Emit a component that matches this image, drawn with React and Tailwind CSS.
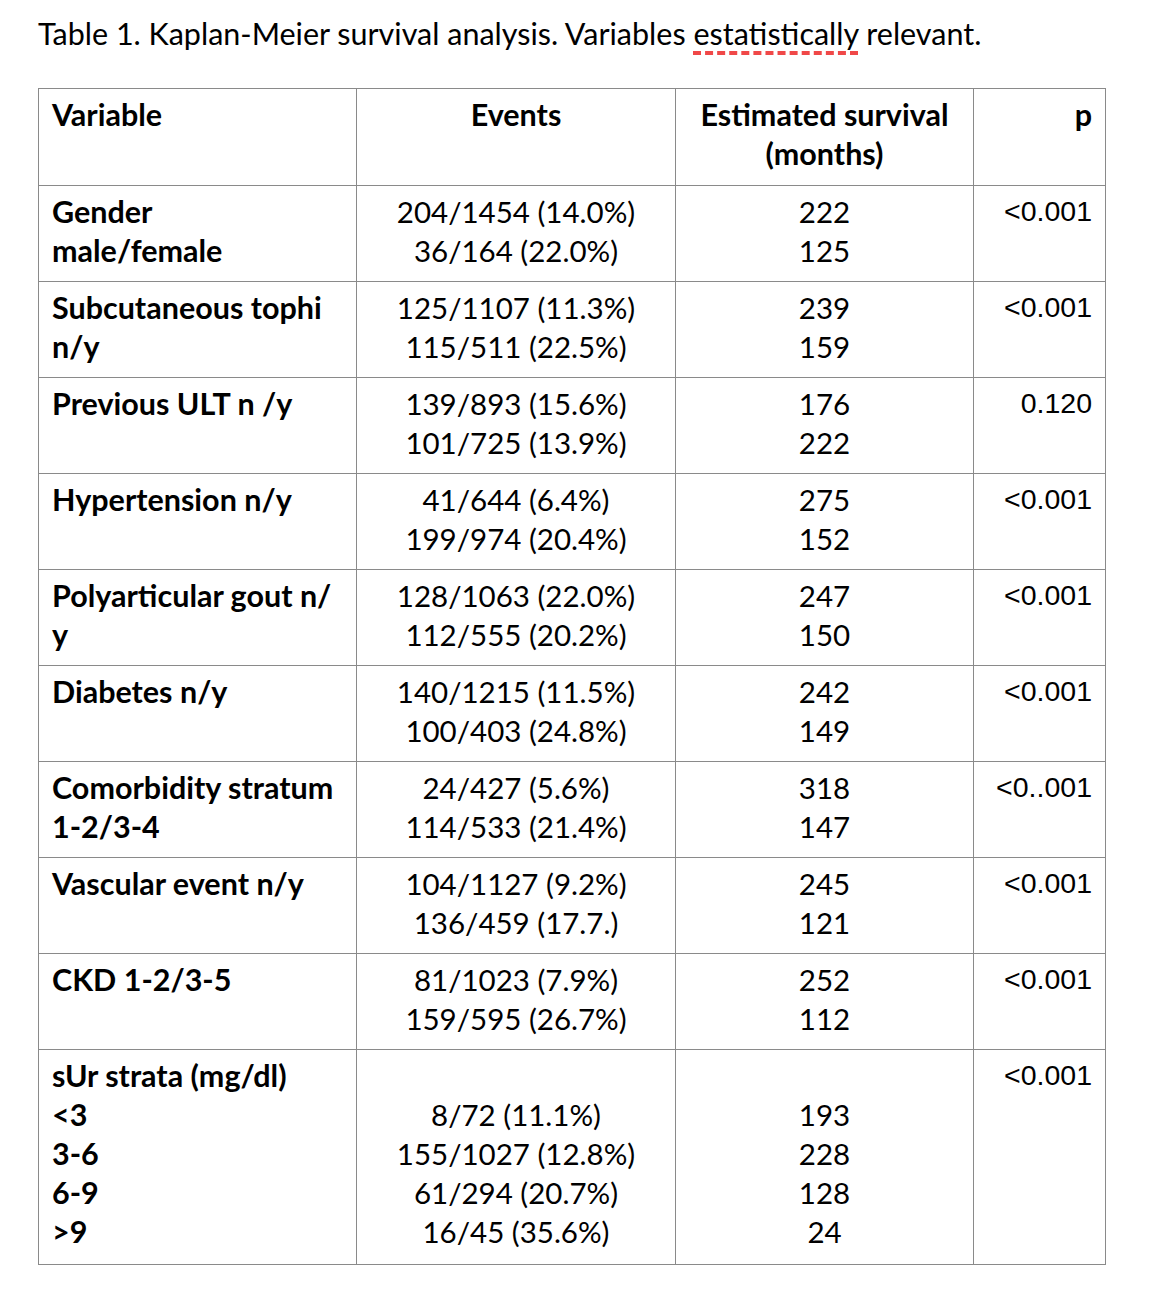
const rows = [
  { label: ["Gender", "male/female"], events: ["204/1454 (14.0%)", "36/164 (22.0%)"], survival: ["222", "125"], p: "<0.001" },
  { label: ["Subcutaneous tophi", "n/y"], events: ["125/1107 (11.3%)", "115/511 (22.5%)"], survival: ["239", "159"], p: "<0.001" },
  { label: ["Previous ULT n /y"], events: ["139/893 (15.6%)", "101/725 (13.9%)"], survival: ["176", "222"], p: "0.120" },
  { label: ["Hypertension n/y"], events: ["41/644 (6.4%)", "199/974 (20.4%)"], survival: ["275", "152"], p: "<0.001" },
  { label: ["Polyarticular gout n/", "y"], events: ["128/1063 (22.0%)", "112/555 (20.2%)"], survival: ["247", "150"], p: "<0.001" },
  { label: ["Diabetes n/y"], events: ["140/1215 (11.5%)", "100/403 (24.8%)"], survival: ["242", "149"], p: "<0.001" },
  { label: ["Comorbidity stratum", "1-2/3-4"], events: ["24/427 (5.6%)", "114/533 (21.4%)"], survival: ["318", "147"], p: "<0..001" },
  { label: ["Vascular event n/y"], events: ["104/1127 (9.2%)", "136/459 (17.7.)"], survival: ["245", "121"], p: "<0.001" },
  { label: ["CKD 1-2/3-5"], events: ["81/1023 (7.9%)", "159/595 (26.7%)"], survival: ["252", "112"], p: "<0.001" },
  {
    label: ["sUr strata (mg/dl)", "<3", "3-6", "6-9", ">9"],
    events: ["", "8/72 (11.1%)", "155/1027 (12.8%)", "61/294 (20.7%)", "16/45 (35.6%)"],
    survival: ["", "193", "228", "128", "24"],
    p: "<0.001",
    tall: true,
  },
];

function Lines({ items }) {
  return items.map((t, i) => (
    <div key={i} className="h-[39px] whitespace-nowrap">
      {t || "\u00a0"}
    </div>
  ));
}

export default function App() {
  return (
    <div className="bg-white w-[1168px] h-[1304px] text-black font-['Lato',sans-serif]">
      <div className="pl-[38px] pt-[14px] text-[30.5px] leading-[39px]">
        Table 1. Kaplan-Meier survival analysis. Variables{" "}
        <span className="underline decoration-dashed decoration-[#f04848] decoration-[4px] underline-offset-[6px]">
          estatistically
        </span>{" "}
        relevant.
      </div>

      <table className="ml-[38px] mt-[35px] border-collapse table-fixed text-[29.5px] leading-[39px]">
        <colgroup>
          <col className="w-[318px]" />
          <col className="w-[319px]" />
          <col className="w-[298px]" />
          <col className="w-[132px]" />
        </colgroup>
        <thead>
          <tr className="h-[97px] text-[30.5px]">
            <th className="border border-[#8a8a8a] align-top text-left pl-[13px] pt-[6px] font-bold">Variable</th>
            <th className="border border-[#8a8a8a] align-top text-center pt-[6px] font-bold">Events</th>
            <th className="border border-[#8a8a8a] align-top text-center pt-[6px] font-bold">
              <div>Estimated survival</div>
              <div>(months)</div>
            </th>
            <th className="border border-[#8a8a8a] align-top text-right pr-[13px] pt-[6px] font-bold">p</th>
          </tr>
        </thead>
        <tbody>
          {rows.map((r, i) => (
            <tr key={i} className={r.tall ? "h-[215px]" : "h-[96px]"}>
              <td className="border border-[#8a8a8a] align-top pl-[13px] pt-[6px] font-bold text-[30.5px]">
                <Lines items={r.label} />
              </td>
              <td className="border border-[#8a8a8a] align-top text-center pt-[6px]">
                <Lines items={r.events} />
              </td>
              <td className="border border-[#8a8a8a] align-top text-center pt-[6px]">
                <Lines items={r.survival} />
              </td>
              <td className="border border-[#8a8a8a] align-top text-right pr-[13px] pt-[6px] font-['Liberation_Sans',sans-serif] text-[28.5px]">
                {r.p}
              </td>
            </tr>
          ))}
        </tbody>
      </table>
    </div>
  );
}
